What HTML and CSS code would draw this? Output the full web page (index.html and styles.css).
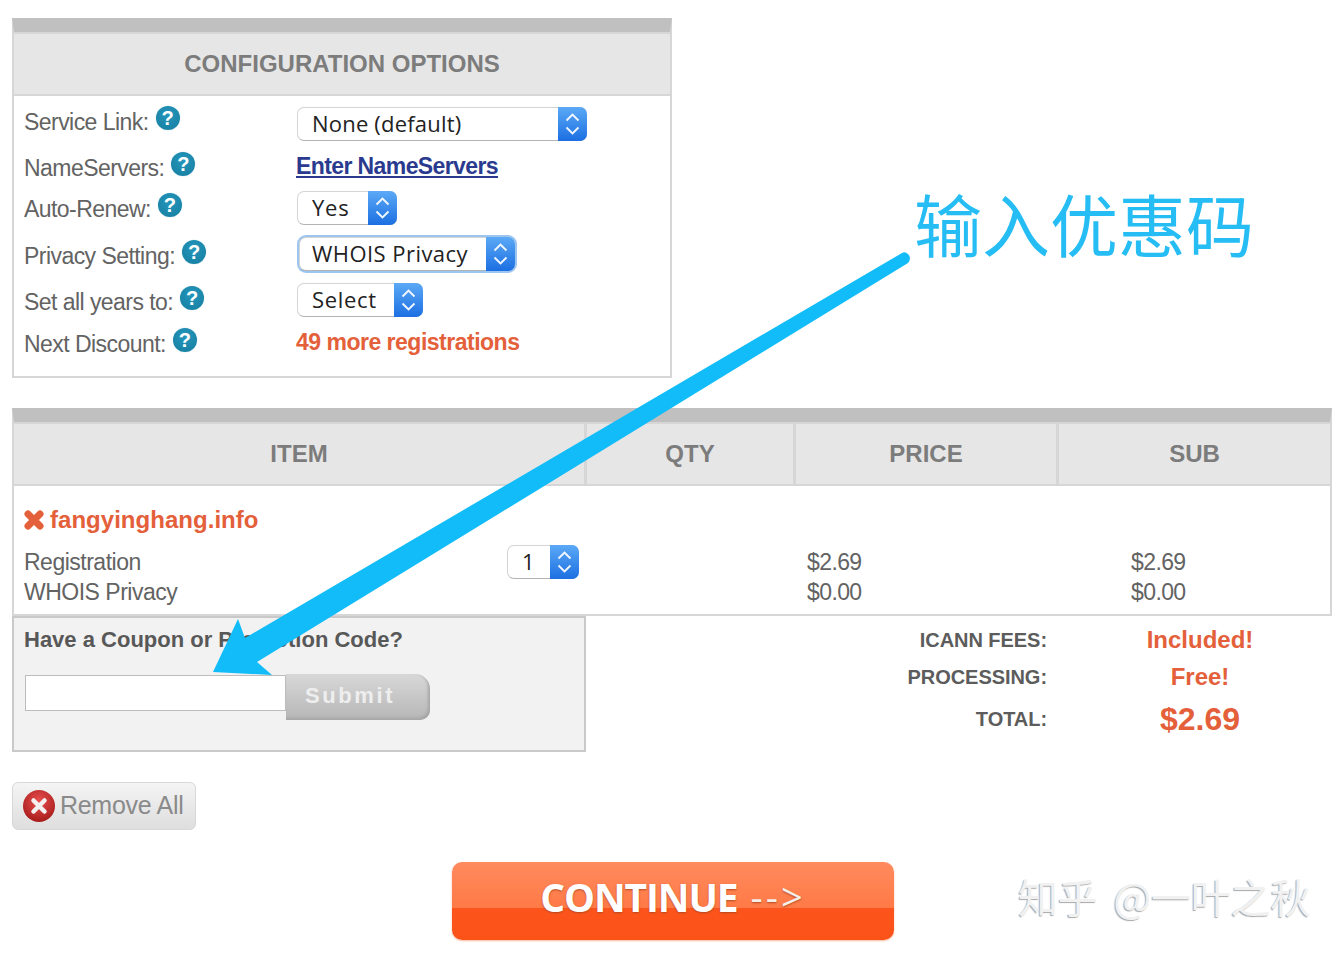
FILE: index.html
```html
<!DOCTYPE html>
<html lang="en">
<head>
<meta charset="utf-8">
<title>Domain cart</title>
<link rel="stylesheet" href="styles.css">
</head>
<body>
<svg class="defs" width="0" height="0" aria-hidden="true">
  <symbol id="updown" viewBox="0 0 29 34">
    <path d="M8.500 13.500 14.500 7.500 20.500 13.500M8.500 20.500 14.500 26.500 20.500 20.500" fill="none" stroke="#f2f7ff" stroke-width="1.900"/>
  </symbol>
</svg>
<main class="page">
  <section class="panel config">
    <h2 class="head-title config-title">CONFIGURATION OPTIONS</h2>
    <div class="config-grid">
      <div class="label">Service Link:<span class="help">?</span></div>
      <div class="value value-low"><span class="sel sel-none">None (default)<span class="cap"><svg width="29" height="34"><use href="#updown"/></svg></span></span></div>
      <div class="label">NameServers:<span class="help">?</span></div>
      <div class="value"><a class="link" href="#">Enter NameServers</a></div>
      <div class="label">Auto-Renew:<span class="help">?</span></div>
      <div class="value value-mid"><span class="sel sel-yes">Yes<span class="cap"><svg width="29" height="34"><use href="#updown"/></svg></span></span></div>
      <div class="label">Privacy Setting:<span class="help">?</span></div>
      <div class="value"><span class="sel sel-whois">WHOIS Privacy<span class="cap"><svg width="29" height="34"><use href="#updown"/></svg></span></span></div>
      <div class="label">Set all years to:<span class="help">?</span></div>
      <div class="value"><span class="sel sel-select">Select<span class="cap"><svg width="29" height="34"><use href="#updown"/></svg></span></span></div>
      <div class="label">Next Discount:<span class="help">?</span></div>
      <div class="value"><span class="discount">49 more registrations</span></div>
    </div>
  </section>

  <section class="panel cart">
    <div class="cart-head">
      <div class="head-title">ITEM</div>
      <div class="head-title">QTY</div>
      <div class="head-title">PRICE</div>
      <div class="head-title">SUB</div>
    </div>
    <div class="cart-body">
      <div class="domain">
        <svg class="x-mark" width="20" height="20" viewBox="0 0 20 20"><path d="M4 4 16 16M16 4 4 16" stroke="#e4603a" stroke-width="7" stroke-linecap="round"/></svg>
        fangyinghang.info
      </div>
      <div class="line">Registration</div>
      <div class="qty"><span class="sel sel-qty">1<span class="cap"><svg width="29" height="34"><use href="#updown"/></svg></span></span></div>
      <div class="line price">$2.69</div>
      <div class="line price">$2.69</div>
      <div class="line">WHOIS Privacy</div>
      <div class="line price">$0.00</div>
      <div class="line price">$0.00</div>
    </div>
  </section>

  <div class="lower">
    <form class="coupon">
      <div class="coupon-title">Have a Coupon or Promotion Code?</div>
      <div class="coupon-row">
        <input class="coupon-input" type="text" aria-label="Coupon code">
        <span class="submit">Submit</span>
      </div>
    </form>
    <div class="totals">
      <div class="t-label">ICANN FEES:</div><div class="t-value">Included!</div>
      <div class="t-label">PROCESSING:</div><div class="t-value">Free!</div>
      <div class="t-label">TOTAL:</div><div class="t-value t-total">$2.69</div>
    </div>
  </div>

  <a class="remove" href="#">
    <svg width="32" height="32" viewBox="0 0 32 32">
      <defs><radialGradient id="red" cx="50%" cy="35%" r="65%"><stop offset="0" stop-color="#e8504f"/><stop offset="1" stop-color="#a81c1c"/></radialGradient></defs>
      <circle cx="16" cy="16" r="16" fill="url(#red)"/>
      <path d="M10.500 10.500 21.500 21.500M21.500 10.500 10.500 21.500" stroke="#f4f0f0" stroke-width="4.500" stroke-linecap="round"/>
    </svg>
    Remove All
  </a>

  <a class="continue" href="#">CONTINUE<span class="continue-arrow">--&gt;</span></a>
</main>

<svg class="arrow" width="1342" height="954" viewBox="0 0 1342 954" aria-hidden="true">
  <path d="M902 253 L245 638 L238 619 L213 672 L272 675 L257 662 L908 263 Q912 258 908 254 Q905 251 902 253 Z" fill="#12bcf8"/>
</svg>
<div class="note">输入优惠码</div>
<div class="watermark">知乎 @一叶之秋</div>
</body>
</html>
```
FILE: styles.css
```css
* { box-sizing: border-box; }
html, body { margin: 0; padding: 0; background: #fff; }
body {
  position: relative;
  width: 1342px;
  height: 954px;
  overflow: hidden;
  font-family: "Liberation Sans", Arial, sans-serif;
  color: #636363;
}
.defs { position: absolute; }
.page { padding: 18px 0 0 12px; }

.panel {
  border: 2px solid #d6d6d6;
  border-top: 14px solid #c0c0c0;
  background: #fff;
}
.config { width: 660px; height: 360px; }
.head-title {
  margin: 0;
  background: #e6e6e6;
  height: 60px;
  display: flex;
  align-items: center;
  justify-content: center;
  font-size: 24px;
  font-weight: 700;
  color: #7c7c7c;
}
.config-title {
  height: 64px;
  box-shadow: inset 0 2px 0 #d6d6d6;
  border-bottom: 2px solid #d6d6d6;
  padding-top: 2px;
}
.config-grid {
  display: grid;
  grid-template-columns: 273px 1fr;
  grid-template-rows: 46px 46px 36px 58px 34px 50px;
  padding: 3px 0 0 10px;
}
.label {
  display: flex;
  align-items: center;
  font-size: 23px;
  letter-spacing: -0.55px;
  color: #636363;
}
.help {
  width: 24px;
  height: 24px;
  margin: -8px 0 0 7px;
  border-radius: 50%;
  background: radial-gradient(circle at 50% 35%, #2496bb, #157d9f);
  box-shadow: 0 0 1px #7fbdd2;
  color: #fff;
  font-size: 20px;
  font-weight: 700;
  letter-spacing: 0;
  line-height: 24px;
  text-align: center;
}
.value { display: flex; align-items: center; padding-bottom: 4px; }
.value-low { padding: 4px 0 0; }
.value-mid { padding-bottom: 2px; }
.link {
  margin-left: -1px;
  font-size: 23px;
  font-weight: 700;
  color: #2a3b8f;
  letter-spacing: -0.6px;
}
.discount {
  margin-left: -1px;
  font-size: 23px;
  font-weight: 700;
  color: #e4603a;
  letter-spacing: -0.5px;
}
.sel {
  position: relative;
  display: block;
  height: 34px;
  padding-left: 14px;
  border: 1px solid #d4d4d4;
  border-bottom-color: #b4b4b4;
  border-radius: 7px;
  background: #fff;
  font-family: "Open Sans", "DejaVu Sans", sans-serif;
  font-size: 22px;
  letter-spacing: 0.2px;
  line-height: 30px;
  color: #222;
}
.cap {
  position: absolute;
  top: -1px;
  right: -1px;
  bottom: -1px;
  width: 29px;
  border-radius: 0 7px 7px 0;
  background: linear-gradient(#5ba9f6, #1c6fe2);
}
.cap svg { display: block; }
.sel-none { width: 290px; }
.sel-yes { width: 100px; letter-spacing: 0.8px; }
.sel-whois {
  width: 216px;
  box-shadow: 0 0 0 2px #9cc6f0;
  margin-left: 2px;
  padding-left: 12px;
  letter-spacing: 0.45px;
}
.sel-select { width: 126px; letter-spacing: 0.7px; }
.sel-qty { width: 72px; padding-left: 14px; }

.cart { width: 1320px; margin-top: 30px; height: 208px; }
.cart-head {
  display: grid;
  grid-template-columns: 570px 206px 260px 271px;
  gap: 3px;
  background: #d6d6d6;
  padding: 2px 0;
}
.cart-body {
  display: grid;
  grid-template-columns: 483px 299px 324px 1fr;
  grid-template-rows: 61px 30px 30px;
  padding-left: 10px;
  font-size: 23px;
  letter-spacing: -0.5px;
}
.domain {
  grid-column: 1 / -1;
  display: flex;
  align-items: center;
  gap: 6px;
  padding-top: 6px;
  font-size: 24px;
  font-weight: 700;
  letter-spacing: 0.03px;
  color: #e4603a;
}
.line { display: flex; align-items: center; color: #636363; }
.price { padding-left: 1px; letter-spacing: -0.6px; }
.qty { grid-row: 2 / span 2; grid-column: 2; }
.qty .sel { margin-top: -2px; }

.lower { display: flex; }
.coupon {
  width: 574px;
  height: 136px;
  padding: 10px 11px;
  border: 2px solid #c9c9c9;
  background: #f2f2f2;
}
.coupon-title {
  margin-left: -1px;
  height: 47px;
  font-size: 22px;
  font-weight: 700;
  line-height: 24px;
  color: #585858;
}
.coupon-row { display: flex; align-items: flex-start; }
.coupon-input {
  width: 261px;
  height: 36px;
  margin: 0;
  padding: 0;
  border: 1px solid #bdbdbd;
  background: #fff;
}
.submit {
  width: 144px;
  height: 46px;
  margin-top: -1px;
  padding-right: 16px;
  border-radius: 0 15px 10px 0;
  background: linear-gradient(#d8d8d8, #b6b6b6);
  box-shadow: inset -2px -2px 3px #a6a6a6;
  color: #eeeeee;
  font-size: 22px;
  font-weight: 700;
  letter-spacing: 2.600px;
  line-height: 44px;
  text-align: center;
}
.totals {
  display: grid;
  grid-template-columns: 461px 200px;
  grid-template-rows: 36px 38px 46px;
  column-gap: 53px;
  padding-top: 6px;
}
.t-label {
  display: flex;
  align-items: center;
  justify-content: flex-end;
  font-size: 20px;
  font-weight: 700;
  letter-spacing: -0.05px;
  color: #5c5c5c;
}
.t-value {
  display: flex;
  align-items: center;
  justify-content: center;
  font-size: 24px;
  font-weight: 700;
  color: #e4603a;
}
.t-total { font-size: 32px; }

.remove {
  display: flex;
  align-items: center;
  gap: 5px;
  width: 184px;
  height: 48px;
  margin-top: 30px;
  padding: 0 0 2px 10px;
  border: 1px solid #d8d8d8;
  border-radius: 6px;
  background: linear-gradient(#f4f4f4, #dedede);
  font-size: 25px;
  letter-spacing: -0.3px;
  color: #8a8a8a;
  text-decoration: none;
}
.remove svg { margin-top: 2px; }
.continue {
  display: flex;
  align-items: center;
  justify-content: center;
  width: 442px;
  height: 78px;
  margin: 32px 0 0 440px;
  padding-bottom: 10px;
  border-radius: 10px;
  background: linear-gradient(#ff8a5e 0, #ff7a47 59%, #fc541c 59%, #fb5218 100%);
  box-shadow: 0 1px 2px #f6b9a0;
  font-family: "Open Sans", sans-serif;
  font-size: 39px;
  font-weight: 700;
  letter-spacing: -1.100px;
  color: #fff;
  text-shadow: 0 1px 2px #b34a20;
  text-decoration: none;
}
.continue-arrow {
  margin-left: 13px;
  font-size: 38px;
  font-weight: 400;
  letter-spacing: 3px;
  color: #f4efe9;
}

.arrow { position: absolute; left: 0; top: 0; pointer-events: none; }
.note {
  position: absolute;
  left: 914px;
  top: 175px;
  font-family: "Noto Sans CJK SC", sans-serif;
  font-weight: 400;
  font-size: 68px;
  line-height: 96px;
  color: #25bdf4;
  white-space: nowrap;
}
.watermark {
  position: absolute;
  left: 1018px;
  top: 870px;
  font-family: "Noto Sans CJK SC", sans-serif;
  font-size: 40px;
  letter-spacing: -0.2px;
  line-height: 52px;
  word-spacing: 7px;
  color: #f1f1f1;
  text-shadow: -1px 1px 1px #a8a8a8;
  white-space: nowrap;
}
```
